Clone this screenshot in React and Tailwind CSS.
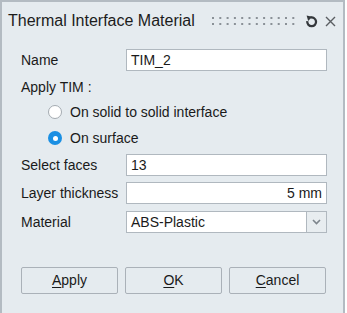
function Grip() {
  const cols = Array.from({ length: 12 }, (_, i) => i)
  return (
    <svg width="86" height="12" viewBox="0 0 86 12" className="shrink-0">
      {cols.map((i) => (
        <g key={i} fill="#8a9197">
          <rect x={1 + i * 7.3} y={2} width="2" height="2" />
          <rect x={1 + i * 7.3} y={8} width="2" height="2" />
        </g>
      ))}
    </svg>
  )
}

function RefreshIcon() {
  return (
    <svg width="13" height="13" viewBox="0 0 13 13" className="shrink-0">
      <path d="M5.4 2.6 A4.4 4.4 0 1 1 2.3 6.2" fill="none" stroke="#34383c" strokeWidth="2.3" />
      <path d="M1.6 0.6 L7.2 1.8 L3.2 6 Z" fill="#34383c" />
    </svg>
  )
}

function CloseIcon() {
  return (
    <svg width="11" height="11" viewBox="0 0 11 11" className="shrink-0">
      <path d="M1 1 L10 10 M10 1 L1 10" stroke="#5a5e62" strokeWidth="1.4" />
    </svg>
  )
}

function Radio({ checked, label }) {
  return (
    <div className="flex items-center h-[20px] pl-[27px]">
      {checked ? (
        <div className="w-[14px] h-[14px] rounded-full bg-[#1a8fe3] flex items-center justify-center">
          <div className="w-[5px] h-[5px] rounded-full bg-white" />
        </div>
      ) : (
        <div className="w-[14px] h-[14px] rounded-full bg-white border border-[#a4abb1]" />
      )}
      <span className="ml-[8px]">{label}</span>
    </div>
  )
}

function Field({ label, children, className }) {
  return (
    <div className={`flex items-center ${className || ''}`}>
      <div className="w-[105px] shrink-0">{label}</div>
      {children}
    </div>
  )
}

function Btn({ mn, rest }) {
  return (
    <button className="w-[97px] h-[27px] border border-[#aab1b8] rounded-[2px] bg-[#e5ebef] text-[#1a1a1a] text-[14px]">
      <span className="underline underline-offset-2">{mn}</span>
      {rest}
    </button>
  )
}

export default function App() {
  return (
    <div
      className="w-[347px] h-[313px] bg-white overflow-hidden"
      style={{ fontFamily: '"Liberation Sans", Arial, sans-serif' }}
    >
      <div className="w-[345px] h-[320px] bg-[#e5ebef] border-2 border-[#b3bbc2] text-[#1a1a1a] text-[14px]">
        <div className="h-[38px] flex items-center pl-[6px] pr-[7px]">
          <span className="text-[16px] text-[#1c1c1c]">Thermal Interface Material</span>
          <div className="ml-auto flex items-center">
            <Grip />
            <div className="ml-[8px] mt-[1px]">
              <RefreshIcon />
            </div>
            <div className="ml-[7px] mt-[1px]">
              <CloseIcon />
            </div>
          </div>
        </div>

        <div className="pl-[19px] pt-[9px]">
          <Field label="Name">
            <div className="w-[201px] h-[22px] bg-white border border-[#b0b8bf] flex items-center px-[4px]">TIM_2</div>
          </Field>
          <div className="h-[20px] mt-[6px] flex items-center">Apply TIM :</div>
          <div className="mt-[5px]">
            <Radio label="On solid to solid interface" />
          </div>
          <div className="mt-[6px]">
            <Radio checked label="On surface" />
          </div>
          <Field label="Select faces" className="mt-[6px]">
            <div className="w-[201px] h-[22px] bg-white border border-[#b0b8bf] flex items-center px-[4px]">13</div>
          </Field>
          <Field label="Layer thickness" className="mt-[6px]">
            <div className="w-[201px] h-[22px] bg-white border border-[#b0b8bf] flex items-center justify-end px-[4px]">5 mm</div>
          </Field>
          <Field label="Material" className="mt-[7px]">
            <div className="w-[181px] h-[22px] bg-white border border-[#b0b8bf] flex items-center px-[4px]">ABS-Plastic</div>
            <div className="w-[20px] h-[22px] border border-l-0 border-[#b0b8bf] bg-[#e8edf0] flex items-center justify-center">
              <svg width="9" height="6" viewBox="0 0 9 6">
                <path d="M1 1 L4.5 4.5 L8 1" fill="none" stroke="#7d858c" strokeWidth="1.6" />
              </svg>
            </div>
          </Field>
          <div className="flex gap-[7px] mt-[34px]">
            <Btn mn="A" rest="pply" />
            <Btn mn="O" rest="K" />
            <Btn mn="C" rest="ancel" />
          </div>
        </div>
      </div>
    </div>
  )
}
